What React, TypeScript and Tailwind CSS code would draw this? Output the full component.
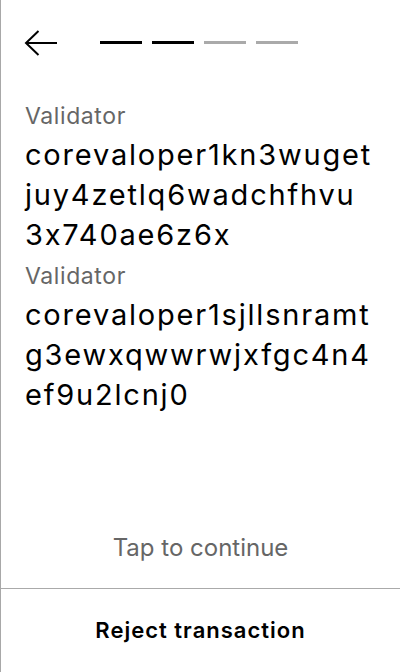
const steps = [true, true, false, false];

const validators = [
  ['corevaloper1kn3wuget', 'juy4zetlq6wadchfhvu', '3x740ae6z6x'],
  ['corevaloper1sjllsnramt', 'g3ewxqwwrwjxfgc4n4', 'ef9u2lcnj0'],
];

export default function App() {
  return (
    <div className="flex h-[672px] w-[400px] flex-col border-l border-[#a8a8a8] bg-white font-['Inter',sans-serif] text-black">
      <div className="flex h-[56px] items-end pl-[23px]">
        <button className="flex h-[26px] items-center">
          <svg width="34" height="26" viewBox="0 0 34 26" fill="none">
            <path d="M2 13H33M14.5 1L2 13L14.5 25" stroke="black" strokeWidth="2" />
          </svg>
        </button>
        <div className="mb-[12px] ml-[42px] flex gap-[10px]">
          {steps.map((done, i) => (
            <div
              key={i}
              className={`h-[3px] w-[42px] ${done ? 'bg-black' : 'bg-[#aaaaaa]'}`}
            />
          ))}
        </div>
      </div>

      <div className="flex flex-1 flex-col gap-[7px] px-6 pt-[46px]">
        {validators.map((lines) => (
          <div key={lines[0]}>
            <p className="text-[23px] leading-[28px] tracking-[0.6px] text-[#666666]">Validator</p>
            <p className="mt-[5px] text-[29px] leading-[40px] tracking-[1.8px]">
              {lines.map((l) => (
                <span key={l} className="block whitespace-nowrap">
                  {l}
                </span>
              ))}
            </p>
          </div>
        ))}
      </div>

      <div className="pb-6 text-center text-[24px] leading-[32px] text-[#666666]">
        Tap to continue
      </div>
      <div className="h-px bg-[#aaaaaa]" />
      <button className="flex h-[83px] items-center justify-center text-[22px] font-semibold tracking-[1px]">
        Reject transaction
      </button>
    </div>
  );
}
